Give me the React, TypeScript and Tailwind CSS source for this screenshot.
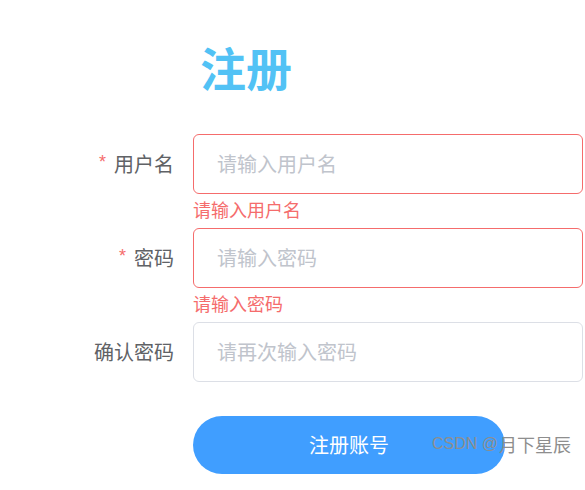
import React from "react";

const font = { fontFamily: '"Noto Sans CJK SC", "Noto Sans", sans-serif' };

function Row({
  label,
  required,
  placeholder,
  error,
}: {
  label: string;
  required?: boolean;
  placeholder: string;
  error?: string;
}) {
  return (
    <div className="flex items-center h-[60px] mb-[34px]">
      <div className="w-[193px] pr-[19px] flex justify-end items-center text-[20px] text-[#606266] leading-[24px]">
        {required && (
          <span className="text-[#f56c6c] mr-[8px] text-[18px] font-['Liberation_Sans',sans-serif] -mt-[4px]">
            *
          </span>
        )}
        <span>{label}</span>
      </div>
      <div className="relative w-[390px] h-[60px]">
        <div
          className={`w-full h-full rounded-[6px] border ${
            error ? "border-[#f56c6c]" : "border-[#dcdfe6]"
          } flex items-center pl-[23px] text-[20px] text-[#c0c4cc]`}
        >
          {placeholder}
        </div>
        {error && (
          <div className="absolute left-0 top-[64px] text-[18px] leading-[22px] text-[#f56c6c]">
            {error}
          </div>
        )}
      </div>
    </div>
  );
}

export default function App() {
  return (
    <div className="w-[585px] h-[490px] bg-white relative overflow-hidden" style={font}>
      <div className="pl-[200px] pt-[43px] h-[89px]">
        <div className="text-[46px] leading-[46px] font-bold text-[#52c2f5]">注册</div>
      </div>
      <div className="mt-[45px]">
        <Row label="用户名" required placeholder="请输入用户名" error="请输入用户名" />
        <Row label="密码" required placeholder="请输入密码" error="请输入密码" />
        <Row label="确认密码" placeholder="请再次输入密码" />
        <div className="flex">
          <div className="w-[193px]" />
          <div className="w-[312px] h-[58px] rounded-full bg-[#409eff] flex items-center justify-center text-white text-[20px]">
            注册账号
          </div>
        </div>
      </div>
      <div className="absolute left-[432px] top-[433px] leading-[22px] text-[#8e8e8e] flex items-center whitespace-nowrap">
        <span className="text-[16px] font-['Liberation_Sans',sans-serif]">CSDN @</span>
        <span className="text-[18px] ml-[1px]">月下星辰</span>
      </div>
    </div>
  );
}
